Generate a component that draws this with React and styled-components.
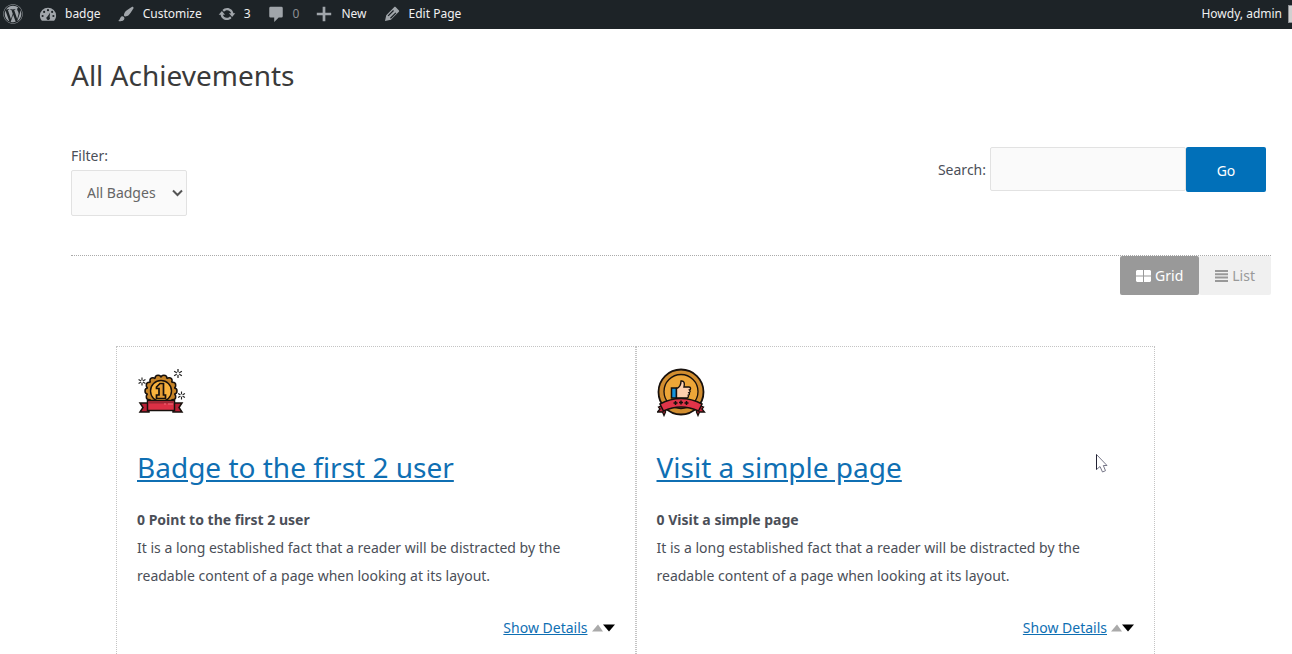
import React, { useState } from "react";
import styled, { createGlobalStyle } from "styled-components";
import { FaWordpress } from "react-icons/fa";

const GlobalStyle = createGlobalStyle`
  *, *::before, *::after { box-sizing: border-box; }
  body {
    margin: 0;
    background: #fff;
    color: #4b4f58;
    font-family: "Noto Sans", "Open Sans", sans-serif;
    font-size: 14px;
    line-height: 28px;
  }
  h1, h2, p { margin: 0; }
  button, input, select { font: inherit; }
`;

const Shell = styled.div`
  height: 100vh;
  overflow: hidden;
`;

const AdminBar = styled.nav`
  display: flex;
  align-items: center;
  gap: 16px;
  height: 29px;
  padding: 0 0 2px 3px;
  background: #1d2327;
  color: #f0f0f1;
  font-size: 12px;
  line-height: 27px;
  white-space: nowrap;
`;

const AdminLink = styled.a`
  display: flex;
  align-items: center;
  gap: 8px;
  color: ${(p) => (p.$muted ? "#8c8f94" : "#f0f0f1")};
  text-decoration: none;
  svg { flex: none; color: #a0a5aa; }
`;

const Account = styled(AdminLink)`
  margin-left: auto;
  gap: 6px;
`;

const Avatar = styled.span`
  width: 4px;
  height: 18px;
  border: 1px solid #8c8f94;
  border-right: 0;
  background: #d0d0d0;
`;

const Main = styled.main`
  padding: 28px 21px 0 71px;
`;

const PageTitle = styled.h1`
  color: #3a3a3a;
  font-size: 28px;
  line-height: 36px;
  font-weight: 400;
`;

const Filters = styled.form`
  display: flex;
  justify-content: space-between;
  align-items: flex-start;
  margin-top: 49px;
  padding-bottom: 39px;
  border-bottom: 1px dotted #aaa;
`;

const FilterGroup = styled.div`
  display: flex;
  flex-direction: column;
  align-items: flex-start;
`;

const SelectBox = styled.div`
  display: grid;
  align-items: center;
  > * { grid-area: 1 / 1; }
  svg { justify-self: end; margin-right: 4px; pointer-events: none; }
`;

const Select = styled.select`
  appearance: none;
  width: 116px;
  height: 46px;
  padding: 0 15px;
  border: 1px solid #e2e2e2;
  border-radius: 2px;
  background: #fafafa;
  color: #666;
`;

const SearchGroup = styled.div`
  display: flex;
  align-items: flex-start;
  margin: 5px 5px 0 0;
  line-height: 45px;
`;

const SearchInput = styled.input`
  width: 196px;
  height: 44px;
  margin-left: 4px;
  padding: 0 12px;
  border: 1px solid #e2e2e2;
  border-radius: 2px;
  background: #fafafa;
`;

const GoButton = styled.button`
  width: 80px;
  height: 45px;
  border: 0;
  border-radius: 2px;
  background: #0170b9;
  color: #fff;
`;

const ViewSwitch = styled.div`
  display: flex;
  justify-content: flex-end;
`;

const ViewButton = styled.button`
  display: flex;
  align-items: center;
  gap: 4px;
  height: 39px;
  padding: 0 16px;
  border: 0;
  border-radius: 2px;
  background: ${(p) => (p.$active ? "#999" : "#f0f0f0")};
  color: ${(p) => (p.$active ? "#fff" : "#999")};
`;

const Cards = styled.section`
  display: grid;
  grid-template-columns: 1fr 1fr;
  margin: 51px 116px 0 45px;
`;

const Card = styled.article`
  height: 340px;
  padding: 20px;
  border: 1px dotted #c4c4c4;
`;

const Badge = styled.svg`
  display: block;
  width: 50px;
  height: 50px;
`;

const CardTitle = styled.h2`
  margin: 30px 0 19px;
  font-size: 28px;
  line-height: 40px;
  font-weight: 400;
`;

const Link = styled.a`
  color: #0f6fb3;
  text-decoration: underline;
`;

const Lead = styled.p`
  font-weight: 700;
`;

const Description = styled.p`
  max-width: 440px;
`;

const Details = styled.div`
  display: flex;
  justify-content: flex-end;
  align-items: center;
  gap: 4px;
  margin-top: 24px;
`;

const Pointer = styled.svg`
  position: absolute;
  left: 1096px;
  top: 454px;
`;

const adminPaths = {
  dashboard:
    "M3.200 17.500h13.600C18.300 15.800 19 14 19 12a9 9 0 0 0-18 0c0 2 .7 3.800 2.200 5.500zM10 4.500a1.200 1.200 0 1 1 0 2.400 1.200 1.200 0 0 1 0-2.400zM5.700 6.500a1.200 1.200 0 1 1 0 2.400 1.200 1.200 0 0 1 0-2.400zM14.600 6.500a1.200 1.200 0 1 1 0 2.400 1.200 1.200 0 0 1 0-2.400zM4 11a1.200 1.200 0 1 1 0 2.400 1.200 1.200 0 0 1 0-2.400zM16 11a1.200 1.200 0 1 1 0 2.400 1.200 1.200 0 0 1 0-2.400zM12.300 8.600l-.5 4.800a2 2 0 1 1-2.400-.6z",
  brush:
    "M18.330 3.570s.27-.8-.31-1.360c-.53-.52-1.220-.24-1.220-.24-.61.3-5.760 3.470-7.670 5.570-.86.96-2.060 3.790-1.090 4.820.92.98 3.960-.17 4.790-1 2.060-2.060 5.210-7.170 5.500-7.790zM1.400 17.650c2.370-1.560 1.460-3.410 3.230-4.640.93-.65 2.220-.62 3.080.29.63.67.8 2.570-.16 3.460-1.570 1.450-4 1.550-6.150.89z",
  update:
    "M10.200 3.280c3.530 0 6.430 2.610 6.920 6h2.080l-3.500 4-3.500-4h2.320c-.45-1.970-2.210-3.450-4.320-3.450-1.450 0-2.730.71-3.540 1.780L4.950 5.660C6.230 4.200 8.110 3.280 10.200 3.280zm-.4 13.440c-3.520 0-6.430-2.610-6.920-6H.8l3.500-4 3.500 4H5.480c.45 1.970 2.210 3.450 4.320 3.450 1.450 0 2.730-.71 3.540-1.780l1.710 1.950c-1.280 1.460-3.150 2.380-5.250 2.380z",
  comment:
    "M4 2h12a1.500 1.500 0 0 1 1.500 1.500v9A1.500 1.500 0 0 1 16 14h-3l-5 5v-5H4a1.500 1.500 0 0 1-1.500-1.500v-9A1.500 1.500 0 0 1 4 2z",
  plus: "M18 8.500v3h-6.500V18h-3v-6.500H2v-3h6.500V2h3v6.500z",
  edit:
    "M14 2.300l3.500 3.500c.6.6.6 1.300.1 1.800l-8.800 8.900-6.600 1.400 1.400-6.600L12.300 2.400c.5-.5 1.200-.6 1.700-.1zM11.200 5.600l-6 6 1 1 6-6zM13.800 8.200l-6 6 1 1 6-6z",
};

function AdminIcon({ name }) {
  return (
    <svg width="18" height="18" viewBox="0 0 20 20" fill="currentColor" fillRule="evenodd" aria-hidden="true">
      <path d={adminPaths[name]} />
    </svg>
  );
}

function Spark({ x, y, s = 1 }) {
  return (
    <g transform={`translate(${x} ${y}) scale(${s})`} stroke="#222" strokeWidth="1.400">
      <path d="M0-5V5M-4.300-2.500 4.300 2.500M-4.300 2.500 4.300-2.500" />
      <circle r="1.700" fill="#fff" stroke="none" />
    </g>
  );
}

const scallops = Array.from({ length: 14 }, (_, i) => {
  const a = (i * Math.PI * 2) / 14;
  return [24 + 13 * Math.cos(a), 24 + 13 * Math.sin(a)];
});

function FirstBadge() {
  return (
    <Badge viewBox="0 0 50 50" role="img" aria-label="First place rosette">
      {scallops.map(([x, y]) => (
        <circle key={x + "-" + y} cx={x} cy={y} r="3" fill="#c78427" stroke="#17100c" strokeWidth="1.500" />
      ))}
      <circle cx="24" cy="24" r="13.500" fill="#c78427" />
      <circle cx="24" cy="24" r="10.500" fill="#f9b33d" stroke="#17100c" strokeWidth="1.400" />
      <path d="M19.500 20 23 16.500h3.500V28h2v3.500h-9V28H22v-6.500h-2.500z" fill="#e09b34" stroke="#17100c" strokeWidth="1.700" />
      <path d="M3 36h9v9H3l3-4.500zM45 36h-9v9h9l-3-4.500z" fill="#b71f34" stroke="#17100c" strokeWidth="1.500" />
      <path d="M10.500 33.500h27v10h-27z" fill="#dc3045" stroke="#17100c" strokeWidth="1.500" />
      <path d="M11 35.500h26" stroke="#9d2635" strokeWidth="2" />
      <path d="M27 37h2M31 37h5" stroke="#f06b77" strokeWidth="1" />
      <Spark x={41} y={6.500} s={0.9} />
      <Spark x={5} y={14.500} s={0.8} />
      <Spark x={44.500} y={28.500} s={0.8} />
    </Badge>
  );
}

function ThumbBadge() {
  return (
    <Badge viewBox="0 0 50 50" role="img" aria-label="Thumbs up medal">
      <circle cx="24" cy="25" r="22.500" fill="#d18d2f" stroke="#17100c" strokeWidth="1.800" />
      <circle cx="24" cy="24.500" r="17" fill="#eda638" stroke="#17100c" strokeWidth="1.300" />
      <path d="M14.500 21h5v10h-5z" fill="#1593dc" stroke="#17100c" strokeWidth="1.500" />
      <path d="M19.500 21.500c3-1 4.500-4 4.500-7.500 3-.5 4 2 3 6h5c2 0 2 2.500.5 3 1 .8.8 2.300-.5 2.700.8.8.5 2.300-.7 2.600.5 1.300-.3 2.700-1.800 2.700H19.500z" fill="#ffd0ae" stroke="#17100c" strokeWidth="1.400" />
      <path d="M1.500 40 8.500 37v8L7 48.500 5.500 45h-5L3 42zM46.500 40l-7-3v8l1.500 3.500 1.500-3.500h5L45 42z" fill="#c52439" stroke="#17100c" strokeWidth="1.300" />
      <path d="M3 37C16.500 30 31.500 30 45 37l-3.500 7c-11-5-24-5-35 0z" fill="#e13449" stroke="#17100c" strokeWidth="1.500" />
      <path d="M18.500 34v4M16.500 36h4M24 33.500v4M22 35.500h4M29.500 34v4M27.500 36h4" stroke="#17100c" strokeWidth="1.500" />
    </Badge>
  );
}

function Achievement({ badge, title, lead }) {
  return (
    <Card>
      {badge}
      <CardTitle><Link href="#achievement">{title}</Link></CardTitle>
      <Lead>{lead}</Lead>
      <Description>
        It is a long established fact that a reader will be distracted by the
        readable content of a page when looking at its layout.
      </Description>
      <Details>
        <Link href="#details">Show Details</Link>
        <svg width="23" height="8" viewBox="0 0 23 8" aria-hidden="true">
          <path d="M0 7.500 6 .5l5 7z" fill="#aaa" />
          <path d="M11 .5h12l-6 7z" fill="#000" />
        </svg>
      </Details>
    </Card>
  );
}

export default function App() {
  const [view, setView] = useState("grid");
  return (
    <Shell>
      <GlobalStyle />
      <AdminBar aria-label="Toolbar">
        <AdminLink href="#wordpress" aria-label="About WordPress"><FaWordpress size={20} /></AdminLink>
        <AdminLink href="#site"><AdminIcon name="dashboard" />badge</AdminLink>
        <AdminLink href="#customize"><AdminIcon name="brush" />Customize</AdminLink>
        <AdminLink href="#updates"><AdminIcon name="update" />3</AdminLink>
        <AdminLink href="#comments" $muted><AdminIcon name="comment" />0</AdminLink>
        <AdminLink href="#new"><AdminIcon name="plus" />New</AdminLink>
        <AdminLink href="#edit"><AdminIcon name="edit" />Edit Page</AdminLink>
        <Account href="#profile">Howdy, admin<Avatar /></Account>
      </AdminBar>
      <Main>
        <PageTitle>All Achievements</PageTitle>
        <Filters onSubmit={(e) => e.preventDefault()}>
          <FilterGroup>
            <label htmlFor="filter">Filter:</label>
            <SelectBox>
              <Select id="filter"><option>All Badges</option></Select>
              <svg width="11" height="8" viewBox="0 0 11 8" fill="none" stroke="#555" strokeWidth="2" aria-hidden="true">
                <path d="M1 1.500 5.500 6 10 1.500" />
              </svg>
            </SelectBox>
          </FilterGroup>
          <SearchGroup>
            <label htmlFor="search">Search:</label>
            <SearchInput id="search" type="text" />
            <GoButton type="submit">Go</GoButton>
          </SearchGroup>
        </Filters>
        <ViewSwitch>
          <ViewButton type="button" $active={view === "grid"} onClick={() => setView("grid")}>
            <svg width="15" height="12" viewBox="0 0 15 12" fill="currentColor" aria-hidden="true">
              <path d="M1 0h6v5.500H0V1zM8 0h6l1 1v4.500H8zM0 6.500h7V12H1l-1-1zM8 6.500h7V11l-1 1H8z" />
            </svg>
            Grid
          </ViewButton>
          <ViewButton type="button" $active={view === "list"} onClick={() => setView("list")}>
            <svg width="13" height="12" viewBox="0 0 13 12" fill="currentColor" aria-hidden="true">
              <path d="M0 0h13v2H0zM0 3.300h13v2H0zM0 6.600h13v2H0zM0 10h13v2H0z" />
            </svg>
            List
          </ViewButton>
        </ViewSwitch>
        <Cards>
          <Achievement badge={<FirstBadge />} title="Badge to the first 2 user" lead="0 Point to the first 2 user" />
          <Achievement badge={<ThumbBadge />} title="Visit a simple page" lead="0 Visit a simple page" />
        </Cards>
      </Main>
      <Pointer width="13" height="19" viewBox="0 0 13 19" aria-hidden="true">
        <path d="M.5.5v15l3.500-3 2.500 5.500 3-1.300L7.300 11.500H11z" fill="#fff" stroke="#778" />
        <path d="M.5.5v15" stroke="#223" />
      </Pointer>
    </Shell>
  );
}
